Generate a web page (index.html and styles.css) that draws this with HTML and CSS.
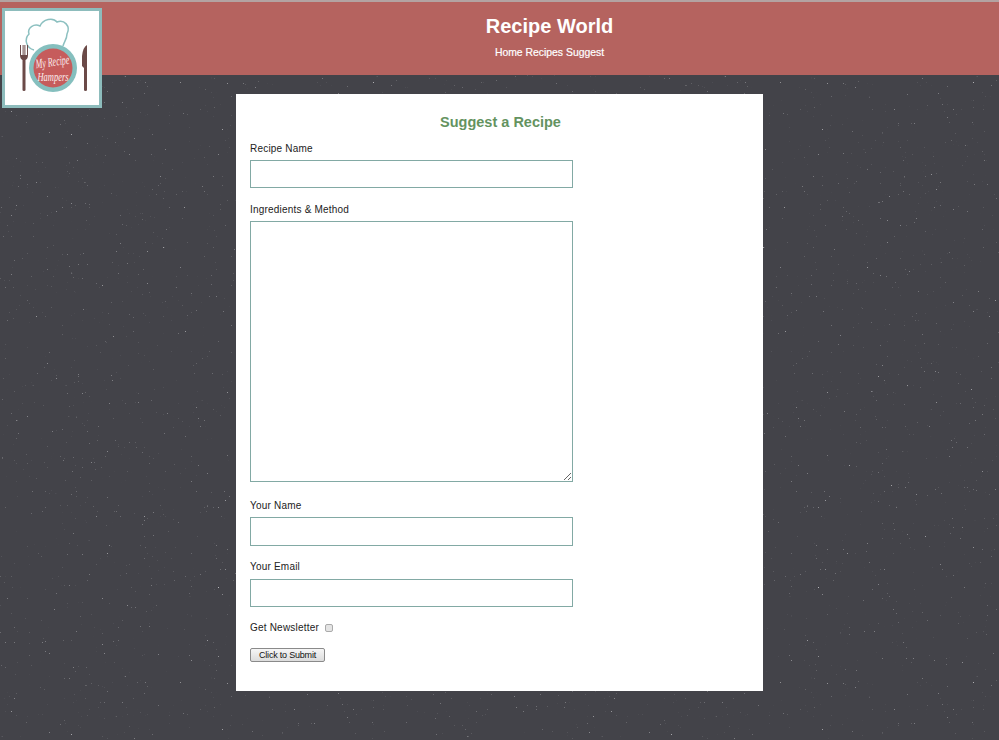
FILE: index.html
```html
<!DOCTYPE html>
<html lang="en">
<head>
    <meta charset="UTF-8">
    <meta name="viewport" content="width=device-width, initial-scale=1.0">
    <title>Recipe World</title>
    <link rel="stylesheet" href="styles.css">
</head>
<body>

    <header class="site-header">
        <div class="logo">
            <svg width="94" height="94" viewBox="0 0 94 94">
                <!-- chef hat -->
                <path d="M29 39 C21 37 19 28 24 23 C22 17 29 12 35 15 C38 8 48 6 52 11 C59 8 66 15 62 23 C62 28 59 31 58 35" fill="#fff" stroke="#8cc0c0" stroke-width="1.5"/>
                <!-- plate -->
                <circle cx="48" cy="57" r="24" fill="#85bfbe"/>
                <circle cx="48" cy="57" r="19.5" fill="#c65c5c"/>
                <text class="logo-text" x="48" y="55" text-anchor="middle" textLength="34" lengthAdjust="spacingAndGlyphs" transform="rotate(-8 48 55)">My Recipe</text>
                <text class="logo-text" x="48" y="70" text-anchor="middle" textLength="31" lengthAdjust="spacingAndGlyphs">Hampers</text>
                <!-- fork -->
                <path d="M15 34 V44 Q15 48 17.5 49 L17.5 79 Q17.5 80 19 80 Q20.5 80 20.5 79 L20.5 49 Q23 48 23 44 V34 H22 V44 H20.4 V34 H19.4 V44 H18.6 V34 H17.6 V44 H16 V34 Z" fill="#6b4a48"/>
                <!-- knife -->
                <path d="M82 34 Q78 36 77 45 L77 55 L79 57 L79 79 Q79 80 80.5 80 Q82 80 82 79 Z" fill="#6b4a48"/>
            </svg>
        </div>
        <h1>Recipe World</h1>
        <nav class="main-nav">
            <a href="#">Home</a>
            <a href="#">Recipes</a>
            <a href="#">Suggest</a>
        </nav>
    </header>

    <main class="card">
        <h2>Suggest a Recipe</h2>
        <form class="recipe-form">
            <label for="recipe-name">Recipe Name</label>
            <input type="text" id="recipe-name" class="field">

            <label for="method">Ingredients &amp; Method</label>
            <textarea id="method" class="field field-big"></textarea>

            <label for="your-name">Your Name</label>
            <input type="text" id="your-name" class="field field-tall">

            <label for="your-email">Your Email</label>
            <input type="text" id="your-email" class="field field-email">

            <div class="newsletter">
                <label for="news">Get Newsletter</label>
                <input type="checkbox" id="news">
            </div>

            <button type="button" class="submit-btn">Click to Submit</button>
        </form>
    </main>

</body>
</html>
```

FILE: styles.css
```css
body {
    margin: 0;
    height: 740px;
    overflow: hidden;
    font-family: "Liberation Sans", Arial, sans-serif;
    background-color: #434349;
    /* speckled chalkboard texture */
    background-image: url("data:image/svg+xml,%3Csvg xmlns='http://www.w3.org/2000/svg' width='600' height='600'%3E%3Cfilter id='n' x='0' y='0' width='100%25' height='100%25'%3E%3CfeTurbulence type='fractalNoise' baseFrequency='0.55' numOctaves='3' seed='7' stitchTiles='stitch'/%3E%3CfeColorMatrix values='0 0 0 0 0.62 0 0 0 0 0.62 0 0 0 0 0.64 0 0 0 5 -3.95'/%3E%3C/filter%3E%3Crect width='600' height='600' filter='url(%23n)'/%3E%3C/svg%3E");
}

.site-header {
    position: relative;
    box-sizing: border-box;
    height: 75px;
    padding-left: 100px;
    border-top: 2px solid #b3a3a2;
    background: #b5635f;
    color: white;
    text-align: center;
}

.site-header h1 {
    margin: 0;
    padding-top: 12px;
    font-size: 20px;
    line-height: 24px;
}

.main-nav {
    margin-top: 8px;
    font-size: 10.4px;
    line-height: 14px;
    -webkit-text-stroke: 0.2px white;
}

.main-nav a {
    color: white;
    text-decoration: none;
}

.logo {
    position: absolute;
    left: 2px;
    top: 6px;
    width: 94px;
    height: 94px;
    border: 3px solid #8dbcbc;
    background: white;
}

.logo svg {
    display: block;
}

.logo-text {
    font-family: "Liberation Serif", serif;
    font-style: italic;
    font-size: 13px;
    fill: #fbeeee;
}

.card {
    box-sizing: border-box;
    width: 527px;
    height: 597px;
    margin: 19px auto 0;
    padding: 18px 14px;
    background: white;
}

.card h2 {
    margin: 0 0 10px;
    padding-left: 2px;
    text-align: center;
    font-size: 14.5px;
    line-height: 20px;
    color: #64935f;
}

.recipe-form label {
    display: block;
    font-size: 10px;
    line-height: 13px;
    color: #222;
    letter-spacing: 0.2px;
}

.field {
    display: block;
    box-sizing: border-box;
    width: 323px;
    height: 28px;
    margin: 5px 0 15px;
    padding: 2px;
    border: 1px solid #82a9a4;
    border-radius: 0;
    background: white;
    outline: none;
}

.field-big {
    height: 261px;
    margin-bottom: 17px;
}

.field-tall {
    height: 29px;
    margin-bottom: 14px;
}

.field-email {
    margin: 6px 0 14px;
}

.newsletter {
    display: flex;
    align-items: center;
    height: 13px;
}

.newsletter input {
    appearance: none;
    box-sizing: border-box;
    width: 8px;
    height: 8px;
    margin: 0 0 0 6px;
    border: 1px solid #aaa;
    border-radius: 2px;
    background: #e4e4e4;
}

.submit-btn {
    display: block;
    box-sizing: border-box;
    width: 75px;
    height: 14px;
    margin-top: 14px;
    padding: 0;
    font-family: "Liberation Sans", Arial, sans-serif;
    font-size: 9px;
    letter-spacing: -0.2px;
    line-height: 12px;
    color: #111;
    border: 1px solid #8a8a8a;
    border-radius: 2px;
    background: linear-gradient(#f6f6f6, #dcdcdc);
    cursor: pointer;
}
```
